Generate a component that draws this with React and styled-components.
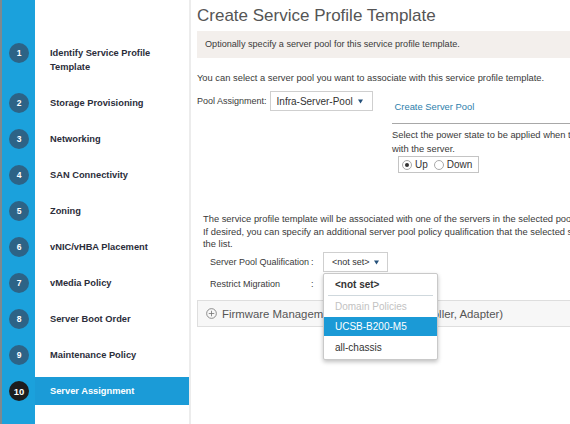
import styled, { createGlobalStyle } from "styled-components";

const steps = [
  "Identify Service Profile Template",
  "Storage Provisioning",
  "Networking",
  "SAN Connectivity",
  "Zoning",
  "vNIC/vHBA Placement",
  "vMedia Policy",
  "Server Boot Order",
  "Maintenance Policy",
  "Server Assignment",
];

const GlobalStyle = createGlobalStyle`
  html, body {
    margin: 0;
    padding: 0;
  }
  body {
    font-family: "Liberation Sans", Arial, sans-serif;
    background: #fff;
    color: #333;
  }
`;

const Page = styled.div`
  display: flex;
  width: 570px;
  height: 424px;
  overflow: hidden;
`;

const Sidebar = styled.nav`
  box-sizing: border-box;
  flex: 0 0 191px;
  border-left: 2px solid #7d8990;
  border-right: 2px solid #ececec;
  background: linear-gradient(to right, #1ba1dc 33px, #fff 33px);
  padding-top: 35px;
  display: flex;
  flex-direction: column;
`;

const StepRow = styled.div`
  display: flex;
  align-items: flex-start;
  padding: 4px 0;
`;

const BadgeCell = styled.div`
  flex: 0 0 33px;
  padding: 4px 0 0 7px;
  box-sizing: border-box;
`;

const Badge = styled.span`
  display: flex;
  align-items: center;
  justify-content: center;
  width: 20px;
  height: 20px;
  border-radius: 50%;
  background: ${(p) => (p.$current ? "#1d1d1f" : "#2d6386")};
  color: #fff;
  font-size: ${(p) => (p.$current ? "9.5px" : "8.5px")};
  font-weight: bold;
`;

const StepLabel = styled.div`
  flex: 1;
  padding: 7px 10px 7px 15px;
  line-height: 14px;
  font-size: 9.3px;
  font-weight: bold;
  color: ${(p) => (p.$active ? "#fff" : "#2b2d3a")};
  background: ${(p) => (p.$active ? "#1b9bd7" : "transparent")};
`;

const Content = styled.main`
  flex: 1;
  min-width: 0;
  padding-left: 6px;
  overflow: hidden;
  font-size: 9.35px;
  color: #3a3a3a;
`;

const Title = styled.h1`
  margin: 5px 0 0;
  font-size: 17px;
  line-height: 22px;
  font-weight: normal;
  color: #555;
  white-space: nowrap;
`;

const Notice = styled.div`
  margin: 4px -20px 0 0;
  height: 27px;
  line-height: 27px;
  padding: 0 8px;
  background: #f3efec;
  white-space: nowrap;
  font-size: 9.1px;
`;

const Text = styled.div`
  margin-top: ${(p) => p.$top || 0}px;
  line-height: 14px;
  white-space: nowrap;
`;

const PoolRow = styled.div`
  display: flex;
  align-items: center;
  margin-top: 6px;
  height: 20px;
`;

const InlineLabel = styled.span`
  margin-right: 3px;
  font-size: 9px;
  white-space: nowrap;
`;

const Select = styled.div`
  box-sizing: border-box;
  display: flex;
  align-items: center;
  justify-content: space-between;
  width: ${(p) => p.$width}px;
  height: 20px;
  padding: 0 ${(p) => p.$padRight}px 0 ${(p) => p.$padLeft}px;
  border: 1px solid #cfcfcf;
  background: #fff;
  font-size: ${(p) => p.$size}px;
  color: #333;
  white-space: nowrap;
`;

const Caret = () => (
  <svg width="5" height="5" viewBox="0 0 5 5">
    <polygon points="0,0.5 5,0.5 2.5,4.5" fill="#24507a" />
  </svg>
);

const CreateLink = styled.span`
  align-self: flex-end;
  margin: 0 0 -3px 22px;
  line-height: 14px;
  font-size: 9.4px;
  color: #2c7eab;
  white-space: nowrap;
`;

const PowerSection = styled.section`
  margin: 12px 0 0 195px;
  padding-top: 4px;
  border-top: 1px solid #a8a8a8;
`;

const RadioGroup = styled.div`
  box-sizing: border-box;
  display: inline-flex;
  align-items: center;
  gap: 3px;
  height: 17px;
  margin-left: 6px;
  padding: 0 6px 0 3px;
  border: 1px solid #c4c4c4;
  font-size: 10px;
  color: #333;
`;

const Radio = styled.span`
  box-sizing: border-box;
  width: 10px;
  height: 10px;
  border-radius: 50%;
  border: 1px solid #a9a9a9;
  background: #fff;
  display: flex;
  align-items: center;
  justify-content: center;
  margin-left: ${(p) => (p.$gap ? 3 : 0)}px;

  &::after {
    content: "";
    display: ${(p) => (p.$checked ? "block" : "none")};
    width: 4px;
    height: 4px;
    border-radius: 50%;
    background: #333;
  }
`;

const Paragraph = styled.div`
  margin-top: 40px;
  padding-left: 6px;
  line-height: 12.5px;
  white-space: nowrap;
`;

const FormRow = styled.div`
  display: flex;
  align-items: center;
  height: 20px;
  margin-top: ${(p) => p.$top}px;
  padding-left: 13px;
  font-size: 9px;
`;

const FieldLabel = styled.span`
  width: 101px;
  white-space: nowrap;
`;

const Colon = styled.span`
  width: 12px;
`;

const Anchor = styled.div`
  position: relative;
`;

const Menu = styled.ul`
  position: absolute;
  top: calc(100% + 1px);
  left: 0;
  z-index: 10;
  width: 115px;
  box-sizing: border-box;
  margin: 0;
  padding: 0;
  list-style: none;
  background: #fff;
  border: 1px solid #c9c9c9;
  border-radius: 2px;
  box-shadow: 0 2px 4px rgba(0, 0, 0, 0.25);
  font-size: 10px;
`;

const MenuItem = styled.li`
  height: ${(p) => p.$h}px;
  line-height: ${(p) => p.$h}px;
  padding-left: 11px;
  white-space: nowrap;
  font-weight: ${(p) => (p.$bold ? "bold" : "normal")};
  color: ${(p) => (p.$selected ? "#fff" : p.$muted ? "#c2c2c2" : "#333")};
  background: ${(p) => (p.$selected ? "#1b9ad6" : "transparent")};
`;

const MenuDivider = styled.li`
  margin: 0 4px;
  border-top: 1px solid #cfd8dd;
`;

const Collapsible = styled.div`
  display: flex;
  align-items: center;
  gap: 5px;
  box-sizing: border-box;
  height: 27px;
  margin: 6px -20px 0 0;
  padding-left: 8px;
  border: 1px solid #dedede;
  background: #f7f7f7;
  font-size: 11.4px;
  color: #555;
  white-space: nowrap;
`;

const PlusCircle = () => (
  <svg width="11" height="11" viewBox="0 0 12 12">
    <circle cx="6" cy="6" r="5.3" fill="none" stroke="#777" strokeWidth="0.9" />
    <path d="M6 3v6M3 6h6" stroke="#777" strokeWidth="0.9" />
  </svg>
);

const App = () => {
  return (
    <Page>
      <GlobalStyle />
      <Sidebar>
        {steps.map((label, i) => {
          const current = i === steps.length - 1;
          return (
            <StepRow key={label}>
              <BadgeCell>
                <Badge $current={current}>{i + 1}</Badge>
              </BadgeCell>
              <StepLabel $active={current}>
                {i === 0 ? (
                  <>
                    Identify Service Profile
                    <br />
                    Template
                  </>
                ) : (
                  label
                )}
              </StepLabel>
            </StepRow>
          );
        })}
      </Sidebar>

      <Content>
        <Title>Create Service Profile Template</Title>
        <Notice>
          Optionally specify a server pool for this service profile template.
        </Notice>
        <Text $top={13}>
          You can select a server pool you want to associate with this service
          profile template.
        </Text>
        <PoolRow>
          <InlineLabel>Pool Assignment:</InlineLabel>
          <Select $width={103} $size={10} $padLeft={6} $padRight={9}>
            Infra-Server-Pool
            <Caret />
          </Select>
          <CreateLink>Create Server Pool</CreateLink>
        </PoolRow>

        <PowerSection>
          <Text>
            Select the power state to be applied when this profile is
            associated
          </Text>
          <Text>with the server.</Text>
          <RadioGroup>
            <Radio $checked />
            Up
            <Radio $gap />
            Down
          </RadioGroup>
        </PowerSection>

        <Paragraph>
          The service profile template will be associated with one of the
          servers in the selected pool.
          <br />
          If desired, you can specify an additional server pool policy
          qualification that the selected server must meet. To do so, select
          the qualification from
          <br />
          the list.
        </Paragraph>

        <FormRow $top={1.5}>
          <FieldLabel>Server Pool Qualification</FieldLabel>
          <Colon>:</Colon>
          <Anchor>
            <Select $width={65} $size={9} $padLeft={8} $padRight={8}>
              &lt;not set&gt;
              <Caret />
            </Select>
            <Menu>
              <MenuItem $h={21} $bold>
                &lt;not set&gt;
              </MenuItem>
              <MenuDivider />
              <MenuItem $h={21} $muted>
                Domain Policies
              </MenuItem>
              <MenuItem $h={19} $selected>
                UCSB-B200-M5
              </MenuItem>
              <MenuItem $h={23}>all-chassis</MenuItem>
            </Menu>
          </Anchor>
        </FormRow>
        <FormRow $top={2}>
          <FieldLabel>Restrict Migration</FieldLabel>
          <Colon>:</Colon>
        </FormRow>

        <Collapsible>
          <PlusCircle />
          Firmware Management (BIOS, Disk Controller, Adapter)
        </Collapsible>
      </Content>
    </Page>
  );
};

export default App;
